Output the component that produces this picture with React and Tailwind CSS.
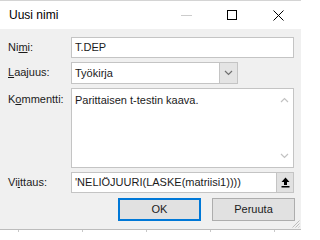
function Label({ children, className = '' }) {
  return <div className={`w-[63px] shrink-0 leading-[14px] ${className}`}>{children}</div>
}

function ChevronUp() {
  return (
    <svg width="9" height="6" viewBox="0 0 9 6" fill="none" stroke="#c2c2c2" strokeWidth="1.2">
      <path d="M1 5l3.5-3.5L8 5" />
    </svg>
  )
}

function ChevronDown({ color = '#c2c2c2' }) {
  return (
    <svg width="9" height="6" viewBox="0 0 9 6" fill="none" stroke={color} strokeWidth="1.2">
      <path d="M1 1l3.5 3.5L8 1" />
    </svg>
  )
}

export default function App() {
  return (
    <div className="w-[301px] h-[232px] bg-white overflow-hidden flex flex-col font-['Liberation_Sans',Arial,sans-serif] text-[11px] text-[#1b1b1b]">
      {/* sheet grid line behind the dialog */}
      <div className="h-px shrink-0 bg-[#d4d4d4]" />

      {/* Title bar */}
      <div className="h-[28px] shrink-0 flex items-center bg-white">
        <span className="pl-[9px] text-[12px] text-black leading-none">Uusi nimi</span>
        <div className="ml-auto flex h-full">
          <div className="w-[46px] flex items-center justify-center">
            <div className="w-[11px] h-px bg-[#cccccc]" />
          </div>
          <div className="w-[46px] flex items-center justify-center">
            <div className="w-[10px] h-[10px] border border-black" />
          </div>
          <div className="w-[46px] flex items-center justify-center">
            <svg width="11" height="11" viewBox="0 0 11 11" stroke="#000" strokeWidth="1">
              <path d="M0.5 0.5l10 10M10.5 0.5l-10 10" />
            </svg>
          </div>
        </div>
      </div>

      {/* Body */}
      <div className="relative h-[200px] shrink-0 bg-[#f0f0f0] pt-[8px] pl-[8px] pr-[6px] flex flex-col">
        <div className="flex items-center h-[21px]">
          <Label className="-mt-[2px]">
            Ni<span className="underline">m</span>i:
          </Label>
          <div className="w-[223px] h-[21px] bg-white border border-[#c4c4c4] flex items-center pl-[3px]">
            T.DEP
          </div>
        </div>

        <div className="flex items-center h-[22px] mt-[4px]">
          <Label className="-mt-[2px]">
            <span className="underline">L</span>aajuus:
          </Label>
          <div className="w-[167px] h-[22px] bg-white border border-[#c4c4c4] flex items-center">
            <span className="pl-[3px]">Työkirja</span>
            <div className="ml-auto w-[18px] h-full bg-[#e4e4e4] border-l border-[#c4c4c4] flex items-center justify-center">
              <ChevronDown color="#707070" />
            </div>
          </div>
        </div>

        <div className="flex items-start h-[80px] mt-[4px]">
          <Label className="pt-[4px]">
            K<span className="underline">o</span>mmentti:
          </Label>
          <div className="w-[223px] h-[80px] bg-white border border-[#c4c4c4] flex">
            <div className="flex-1 pl-[3px] pt-[4px] leading-[14px]">Parittaisen t-testin kaava.</div>
            <div className="w-[17px] flex flex-col items-center justify-between py-[8px]">
              <ChevronUp />
              <ChevronDown />
            </div>
          </div>
        </div>

        <div className="flex items-center h-[21px] mt-[4px]">
          <Label className="-mt-[2px]">
            Vi<span className="underline">i</span>ttaus:
          </Label>
          <div className="w-[223px] h-[21px] bg-white border border-[#c4c4c4] flex items-center">
            <span className="pl-[3px] whitespace-nowrap">'NELIÖJUURI(LASKE(matriisi1))))</span>
            <div className="ml-auto w-[17px] h-full bg-[#e1e1e1] border-l border-[#c4c4c4] flex items-center justify-center">
              <svg width="9" height="11" viewBox="0 0 9 11" fill="#000">
                <path d="M4.5 0.5L8.5 5H6v3H3V5H0.5z" />
                <rect x="0.5" y="9" width="8" height="1.5" />
              </svg>
            </div>
          </div>
        </div>

        <div className="flex justify-end gap-[11px] mt-[5px]">
          <button className="w-[83px] h-[23px] bg-[#e1e1e1] border border-[#0078d7] shadow-[inset_0_0_0_1px_#0078d7] flex items-center justify-center">
            OK
          </button>
          <button className="w-[83px] h-[23px] bg-[#e1e1e1] border border-[#adadad] flex items-center justify-center">
            Peruuta
          </button>
        </div>

        {/* size grip */}
        <svg className="absolute right-[1px] bottom-[1px]" width="9" height="9" viewBox="0 0 9 9" stroke="#bdbdbd" strokeWidth="1">
          <path d="M8.5 1.5L1.5 8.5M8.5 4.5L4.5 8.5M8.5 7.5L7.5 8.5" />
        </svg>
      </div>

      {/* sheet behind */}
      <div className="h-px shrink-0 bg-[#bcbcbc]" />
      <div className="flex-1 flex pl-[18px] gap-[63px]">
        <div className="w-px bg-[#c8c8c8]" />
        <div className="w-px bg-[#c8c8c8]" />
        <div className="w-px bg-[#c8c8c8]" />
        <div className="w-px bg-[#c8c8c8]" />
        <div className="w-px bg-[#c8c8c8]" />
      </div>
    </div>
  )
}
